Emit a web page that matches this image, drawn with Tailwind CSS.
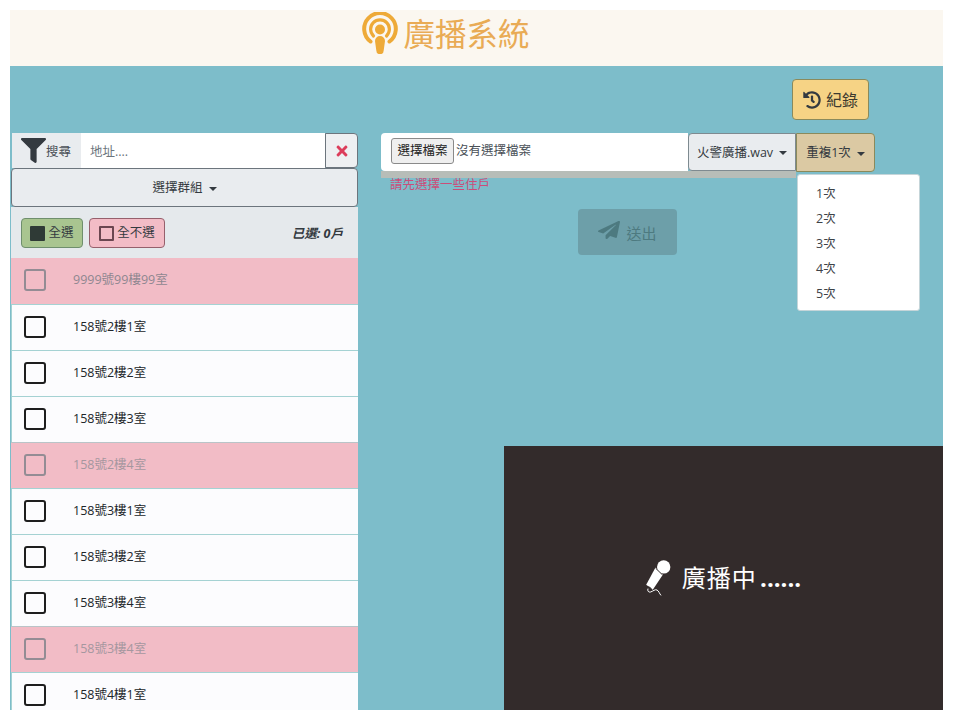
<!DOCTYPE html>
<html lang="zh-Hant">
  <head>
    <meta charset="UTF-8" />
    <meta name="viewport" content="width=device-width, initial-scale=1.0" />
    <title>廣播系統</title>
    <script src="https://cdn.jsdelivr.net/npm/@tailwindcss/browser@4"></script>
  </head>
  <body class="bg-white h-screen overflow-hidden font-['Open_Sans','Noto_Sans_CJK_TC',sans-serif] text-[#212529]">
    <div class="ml-[10px] pt-[10px] w-[933px] h-[710px] flex flex-col overflow-hidden">
      <!-- Header -->
      <header class="h-[56px] shrink-0 bg-[#fbf7f0] flex items-center justify-center gap-[5px] pr-[61px] pb-[10px]">
        <svg class="w-[36px] h-[42px]" viewBox="0 0 36 42" fill="none">
          <path d="M8.5 29.5a15.8 15.8 0 1 1 19 0" stroke="#eeaa38" stroke-width="4" stroke-linecap="round" />
          <path d="M11.5 24a9.4 9.4 0 1 1 13 0" stroke="#eeaa38" stroke-width="3.2" stroke-linecap="round" />
          <circle cx="18" cy="17.5" r="5" fill="#eeaa38" />
          <path d="M13 29a5 5 0 0 1 10 0l-1.3 9.5a3.7 3.7 0 0 1-7.4 0z" fill="#eeaa38" />
        </svg>
        <h1 class="text-[31.5px] leading-none text-[#e9ab55] font-['Noto_Sans_CJK_TC',sans-serif] font-normal">廣播系統</h1>
      </header>

      <main class="relative flex-1 bg-[#7dbdca] overflow-hidden">
        <!-- History button -->
        <div class="h-[67px] flex justify-end items-start pt-[13px] pr-[74px]">
          <button class="w-[77px] h-[41px] flex items-center justify-center gap-[5px] bg-[#f6d385] border border-[#8a8a5c] rounded text-[16px] text-[#3d3a30]">
            <svg class="w-[18px] h-[18px]" viewBox="0 0 512 512" fill="#343a40"><path d="M504 255.531c.253 136.64-111.18 248.372-247.82 248.468-59.015.042-113.223-20.53-155.822-54.911-11.077-8.94-11.905-25.541-1.839-35.607l11.267-11.267c8.609-8.609 22.353-9.551 31.891-1.984C173.062 425.135 212.781 440 256 440c101.705 0 184-82.311 184-184 0-101.705-82.311-184-184-184-48.814 0-93.149 18.969-126.068 49.932l50.754 50.754c10.08 10.08 2.941 27.314-11.313 27.314H24c-8.837 0-16-7.163-16-16V38.627c0-14.254 17.234-21.393 27.314-11.314l49.372 49.372C129.209 31.084 189.552 8 256 8c136.81 0 247.747 110.78 248 247.531zm-180.912 78.784l9.823-12.63c8.138-10.463 6.253-25.542-4.21-33.679L288 256.349V152c0-13.255-10.745-24-24-24h-16c-13.255 0-24 10.745-24 24v135.651l65.409 50.874c10.463 8.137 25.541 6.253 33.679-4.21z" /></svg>
            紀錄
          </button>
        </div>

        <div class="flex items-start">
          <!-- Resident list -->
          <section class="w-[348px] ml-px shrink-0">
            <div class="flex h-[35px] pl-px">
              <div class="w-[69px] bg-[#e9ecef] flex items-center pl-[9px] text-[12.5px] text-[#495057]">
                <svg class="w-[25px] h-[25px] shrink-0" viewBox="0 0 512 512" fill="#343a40"><path d="M487.976 0H24.028C2.71 0-8.047 25.866 7.058 40.971L192 225.941V432c0 7.831 3.821 15.17 10.237 19.662l80 55.98C298.02 518.69 320 507.493 320 487.98V225.941l184.947-184.97C520.021 25.896 509.338 0 487.976 0z" /></svg>
                <span class="pt-[3px]">搜尋</span>
              </div>
              <input class="w-[244px] bg-white pl-[9px] pt-[3px] text-[12.5px] outline-none placeholder:text-[#6c757d]" placeholder="地址...." />
              <button class="w-[33px] bg-[#eef0f2] border border-[#6c757d] rounded-r flex items-center justify-center">
                <svg class="w-[12px] h-[16px]" viewBox="0 0 352 512" fill="#dc3d5b"><path d="M242.72 256l100.07-100.07c12.28-12.28 12.28-32.19 0-44.48l-22.24-22.24c-12.28-12.28-32.19-12.28-44.48 0L176 189.28 75.93 89.21c-12.28-12.28-32.19-12.28-44.48 0L9.21 111.45c-12.28 12.28-12.28 32.19 0 44.48L109.28 256 9.21 356.07c-12.28 12.28-12.28 32.19 0 44.48l22.24 22.24c12.28 12.28 32.2 12.28 44.48 0L176 322.72l100.07 100.07c12.28 12.28 32.2 12.28 44.48 0l22.24-22.24c12.28-12.28 12.28-32.19 0-44.48L242.72 256z" /></svg>
              </button>
            </div>
            <button class="w-[347px] h-[39px] pt-[2px] bg-[#e9ecef] border border-[#6c757d] rounded flex items-center justify-center gap-[6px] text-[12.5px] text-[#343a40]">
              選擇群組
              <span class="border-x-[4px] border-x-transparent border-t-[4px] border-t-[#343a40]"></span>
            </button>
            <div class="h-[51px] w-[347px] pl-px bg-[#e5e9ec] flex items-center pr-[15px] gap-[6px]">
              <button class="ml-[9px] w-[62px] h-[30px] pt-[2px] bg-[#a9c590] border border-[#6f8f6d] rounded flex items-center justify-center gap-[3px] text-[12.5px] text-[#343a40]">
                <span class="w-[15px] h-[15px] bg-[#2f3a36] rounded-[1px]"></span>全選
              </button>
              <button class="w-[76px] h-[30px] pt-[2px] bg-[#f3bcc6] border border-[#96606c] rounded flex items-center justify-center gap-[3px] text-[12.5px] text-[#343a40]">
                <span class="w-[15px] h-[15px] border-2 border-[#6b4650] rounded-[1px]"></span>全不選
              </button>
              <span class="ml-auto pt-[4px] text-[12.5px] italic font-bold text-[#343a40]">已選: 0戶</span>
            </div>
            <ul class="w-[347px] text-[12.5px]">
              <li class="h-[46px] pl-[13px] pb-[2px] flex items-center gap-[27px] bg-[#f2bcc6] text-[#8f8790]">
                <span class="w-[22px] h-[22px] border-[2px] border-[#948c94] rounded-[3px]"></span>9999號99樓99室
              </li>
              <li class="h-[46px] pl-[12px] pb-px flex items-center gap-[27px] bg-[#fcfcfe] border-t border-l border-[#a5d2d3] text-[#212529]">
                <span class="w-[22px] h-[22px] border-[2px] border-[#1e1e1e] rounded-[3px]"></span>158號2樓1室
              </li>
              <li class="h-[46px] pl-[12px] pb-px flex items-center gap-[27px] bg-[#fcfcfe] border-t border-l border-[#a5d2d3] text-[#212529]">
                <span class="w-[22px] h-[22px] border-[2px] border-[#1e1e1e] rounded-[3px]"></span>158號2樓2室
              </li>
              <li class="h-[46px] pl-[12px] pb-px flex items-center gap-[27px] bg-[#fcfcfe] border-t border-l border-[#a5d2d3] text-[#212529]">
                <span class="w-[22px] h-[22px] border-[2px] border-[#1e1e1e] rounded-[3px]"></span>158號2樓3室
              </li>
              <li class="h-[46px] pl-[13px] pb-px flex items-center gap-[27px] bg-[#f2bcc6] border-t border-[#b9c4c8] text-[#a5979f]">
                <span class="w-[22px] h-[22px] border-[2px] border-[#948c94] rounded-[3px]"></span>158號2樓4室
              </li>
              <li class="h-[46px] pl-[12px] pb-px flex items-center gap-[27px] bg-[#fcfcfe] border-t border-l border-[#a5d2d3] text-[#212529]">
                <span class="w-[22px] h-[22px] border-[2px] border-[#1e1e1e] rounded-[3px]"></span>158號3樓1室
              </li>
              <li class="h-[46px] pl-[12px] pb-px flex items-center gap-[27px] bg-[#fcfcfe] border-t border-l border-[#a5d2d3] text-[#212529]">
                <span class="w-[22px] h-[22px] border-[2px] border-[#1e1e1e] rounded-[3px]"></span>158號3樓2室
              </li>
              <li class="h-[46px] pl-[12px] pb-px flex items-center gap-[27px] bg-[#fcfcfe] border-t border-l border-[#a5d2d3] text-[#212529]">
                <span class="w-[22px] h-[22px] border-[2px] border-[#1e1e1e] rounded-[3px]"></span>158號3樓4室
              </li>
              <li class="h-[46px] pl-[13px] pb-px flex items-center gap-[27px] bg-[#f2bcc6] border-t border-[#b9c4c8] text-[#a5979f]">
                <span class="w-[22px] h-[22px] border-[2px] border-[#948c94] rounded-[3px]"></span>158號3樓4室
              </li>
              <li class="h-[46px] pl-[12px] pb-px flex items-center gap-[27px] bg-[#fcfcfe] border-t border-l border-[#a5d2d3] text-[#212529]">
                <span class="w-[22px] h-[22px] border-[2px] border-[#1e1e1e] rounded-[3px]"></span>158號4樓1室
              </li>
            </ul>
          </section>

          <!-- Broadcast form -->
          <section class="ml-[22px] w-[494px]">
            <div class="relative flex h-[39px]">
              <div class="w-[307px] h-[38px] pb-[2px] bg-white rounded-l flex items-center pl-[10px] text-[12.5px] text-[#495057]">
                <button class="w-[63px] h-[26px] mr-[2px] bg-[#efefef] border border-[#8a8a8a] rounded-[3px] text-[12.5px] text-[#222]">選擇檔案</button>
                沒有選擇檔案
              </div>
              <button class="w-[108px] h-[38px] pt-[2px] bg-[#e9ecef] border border-[#7e8a90] rounded-l flex items-center justify-center gap-[6px] text-[12.5px] text-[#343a40]">
                火警廣播.wav
                <span class="border-x-[4px] border-x-transparent border-t-[4px] border-t-[#343a40]"></span>
              </button>
              <button class="w-[79px] h-[39px] pt-[2px] bg-[#dbc9a3] border border-[#8a8a5c] rounded-r flex items-center justify-center gap-[6px] text-[12.5px] text-[#343a40]">
                重複1次
                <span class="border-x-[4px] border-x-transparent border-t-[4px] border-t-[#343a40]"></span>
              </button>
              <div class="absolute left-0 top-[38px] w-[415px] h-[7px] bg-[#b7bdb8]"></div>
            </div>
            <p class="mt-[6px] pl-[9px] text-[12.5px] leading-[14px] text-[#cb4d79]">請先選擇一些住戶</p>
            <div class="flex justify-center mt-[17px] pr-[1px]">
              <button class="w-[99px] h-[46px] pt-[2px] bg-[#6d9fa9] rounded flex items-center justify-center gap-[6px] text-[15px] text-[#4d7a80]">
                <svg class="w-[22px] h-[18px] -mt-[6px]" viewBox="0 0 512 512" fill="#4d7a80" preserveAspectRatio="none"><path d="M476 3.2L12.5 270.6c-18.1 10.4-15.8 35.6 2.2 43.2L121 358.4l287.3-253.2c5.5-4.9 13.3 2.6 8.6 8.3L176 407v80.5c0 23.6 28.5 32.9 42.5 15.8L282 426l124.6 52.2c14.2 6 30.4-2.9 33-18.2l72-432C515 7.8 493.3-6.8 476 3.2z" /></svg>
                送出
              </button>
            </div>
          </section>
        </div>

        <!-- Repeat dropdown -->
        <ul class="absolute left-[787px] top-[108px] w-[123px] h-[137px] py-[7px] bg-white border border-[#c5d5d9] rounded-[3px] text-[12.5px] text-[#3d4247]">
          <li class="h-[25px] pl-[18px] flex items-center">1次</li>
          <li class="h-[25px] pl-[18px] flex items-center">2次</li>
          <li class="h-[25px] pl-[18px] flex items-center">3次</li>
          <li class="h-[25px] pl-[18px] flex items-center">4次</li>
          <li class="h-[25px] pl-[18px] flex items-center">5次</li>
        </ul>

        <!-- On-air overlay -->
        <div class="absolute right-0 bottom-0 w-[439px] h-[264px] pr-[2px] bg-[#332b2b] flex items-center justify-center gap-[10px] text-white text-[24px] tracking-[1px]">
          <svg class="w-[28px] h-[36px]" viewBox="0 0 28 36" fill="none">
            <circle cx="19.7" cy="6.9" r="6.7" fill="#fff" />
            <path d="M11.5 7.5l7.3 7.3L8.8 29.8 2.2 24.8z" fill="#fff" />
            <path d="M11.6 8.2l6.6 6.4" stroke="#332b2b" stroke-width="1" />
            <path d="M4.5 26.5l3 2.2" stroke="#332b2b" stroke-width="1" />
            <path d="M4 28.6c-.8 2.2.4 4 2.6 3.4 2.6-.8 4.4-3 6.4-2 1.9 1 2.4 3.6 4 5.4" stroke="#fff" stroke-width="1" />
          </svg>
          <span>廣播中 <span class="-ml-[4px] font-bold tracking-normal">......</span></span>
        </div>
      </main>
    </div>
  </body>
</html>
